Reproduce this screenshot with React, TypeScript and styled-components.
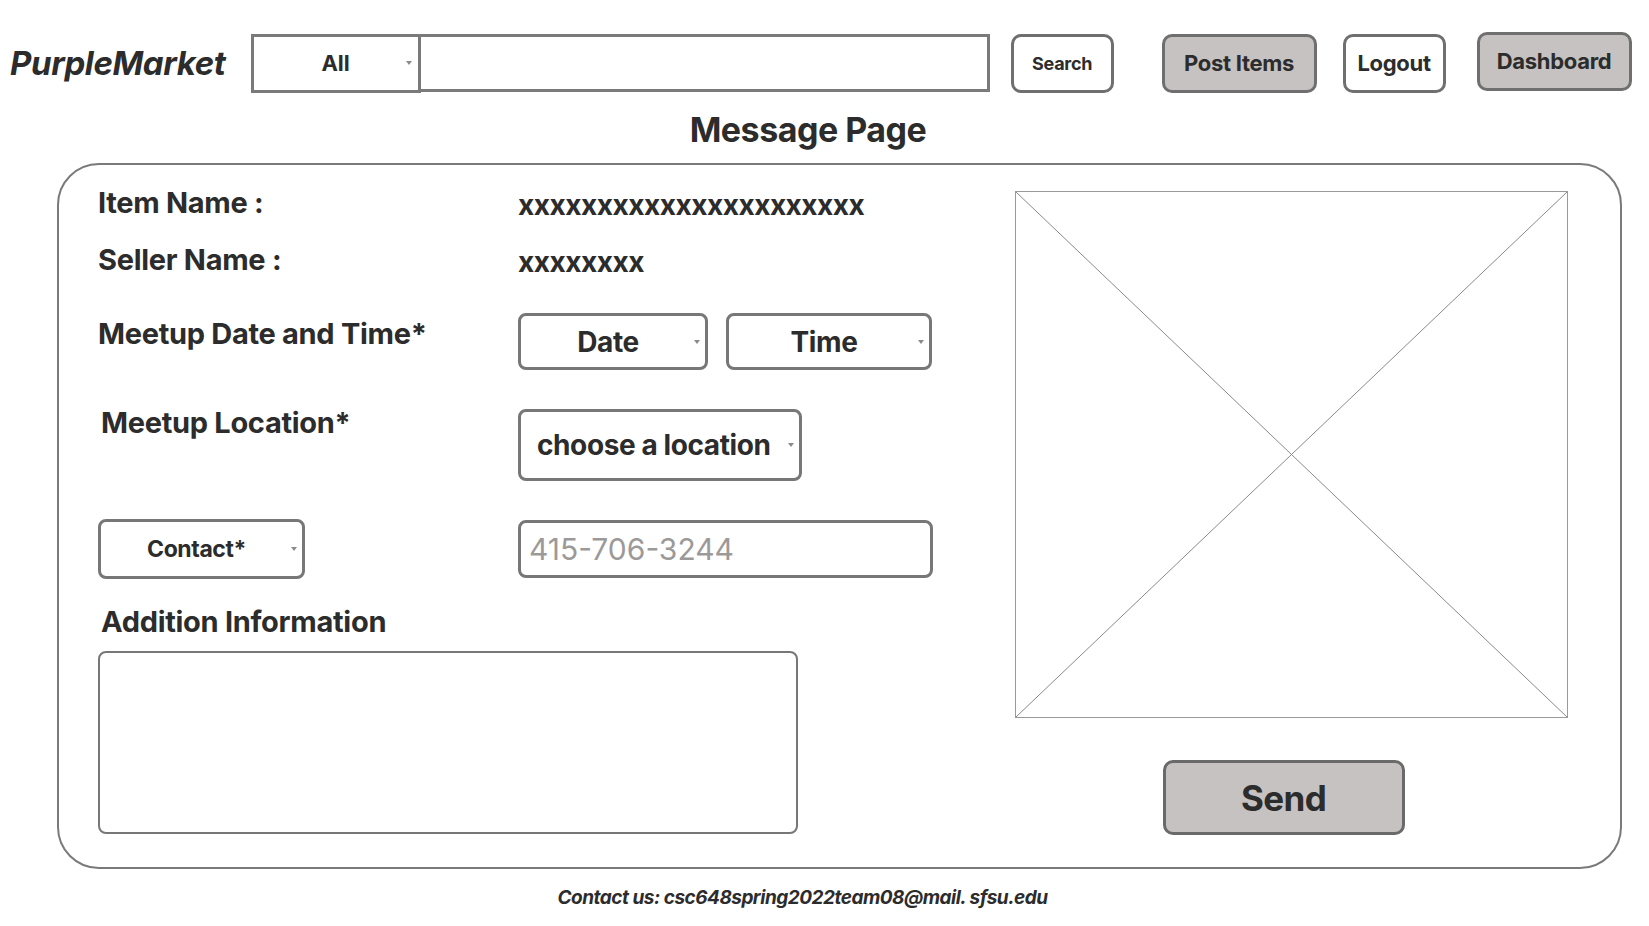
import styled, { createGlobalStyle } from "styled-components";

const GlobalStyle = createGlobalStyle`
  html, body {
    margin: 0;
    padding: 0;
    background: #ffffff;
  }
  body {
    font-family: "Inter", "Liberation Sans", sans-serif;
    color: #2c2c2c;
  }
`;

const Page = styled.div`
  width: 1649px;
  height: 926px;
  display: flex;
  flex-direction: column;
  box-sizing: border-box;
  padding-top: 33px;
`;

const Header = styled.header`
  display: flex;
  align-items: center;
  height: 60px;
  padding-left: 10px;
`;

const Logo = styled.div`
  font-size: 33px;
  font-weight: 700;
  font-style: italic;
  letter-spacing: -0.4px;
  margin-right: 25px;
`;

const CategorySelect = styled.div`
  position: relative;
  box-sizing: border-box;
  width: 170px;
  height: 59px;
  border: 3px solid #7a7a7a;
  display: flex;
  align-items: center;
  justify-content: center;
  font-size: 22px;
  font-weight: 700;
`;

const SearchInput = styled.input`
  box-sizing: border-box;
  width: 569px;
  height: 58px;
  border: 3px solid #7a7a7a;
  border-left: none;
  outline: none;
  font-size: 22px;
  padding: 0 10px;
`;

const Caret = styled.span<{ $right: number }>`
  position: absolute;
  right: ${(p) => p.$right}px;
  top: 50%;
  transform: translateY(-50%);
  width: 0;
  height: 0;
  border-left: 3px solid transparent;
  border-right: 3px solid transparent;
  border-top: 4px solid #8a8a8a;
`;

const HeaderButton = styled.button<{ $gray?: boolean; $width: number; $size: number; $gap: number; $lift?: number }>`
  box-sizing: border-box;
  width: ${(p) => p.$width}px;
  height: 59px;
  margin-left: ${(p) => p.$gap}px;
  margin-top: ${(p) => -(p.$lift ?? 0)}px;
  border: 3px solid #6f6f6f;
  border-radius: 10px;
  background: ${(p) => (p.$gray ? "#c5c2c1" : "#ffffff")};
  color: #2c2c2c;
  font-family: "Inter", "Liberation Sans", sans-serif;
  font-size: ${(p) => p.$size}px;
  font-weight: 700;
  letter-spacing: -0.3px;
  padding: 0;
  cursor: pointer;
`;

const Title = styled.h1`
  margin: 17px 0 0 0;
  padding-right: 33px;
  text-align: center;
  font-size: 34px;
  line-height: 40px;
  font-weight: 700;
  letter-spacing: -0.5px;
`;

const Card = styled.main`
  box-sizing: border-box;
  margin: 13px 27px 0 57px;
  height: 706px;
  border: 2px solid #7a7a7a;
  border-radius: 42px;
  display: flex;
  padding: 20px 52px 0 39px;
`;

const FormColumn = styled.div`
  width: 834px;
  display: flex;
  flex-direction: column;
`;

const Row = styled.div<{ $top: number }>`
  display: grid;
  grid-template-columns: 420px 1fr;
  align-items: start;
  margin-top: ${(p) => p.$top}px;
`;

const Label = styled.div<{ $shift?: number; $drop?: number }>`
  font-size: 29px;
  line-height: 36px;
  font-weight: 700;
  letter-spacing: -0.3px;
  margin-left: ${(p) => p.$shift ?? 0}px;
  margin-top: ${(p) => p.$drop ?? 0}px;
`;

const Value = styled.div`
  font-size: 28px;
  line-height: 32px;
  font-weight: 700;
  letter-spacing: -0.5px;
  padding-top: 4px;
`;

const SelectGroup = styled.div`
  display: flex;
  gap: 18px;
`;

const SelectBox = styled.div<{ $width: number; $height: number; $size: number; $align?: string }>`
  position: relative;
  box-sizing: border-box;
  width: ${(p) => p.$width}px;
  height: ${(p) => p.$height}px;
  border: 3px solid #777777;
  border-radius: 8px;
  display: flex;
  align-items: center;
  justify-content: ${(p) => p.$align ?? "center"};
  padding: ${(p) => (p.$align ? "0 0 0 16px" : "0 10px 0 0")};
  font-size: ${(p) => p.$size}px;
  font-weight: 700;
  letter-spacing: -0.4px;
  background: #ffffff;
`;

const PhoneInput = styled.input`
  box-sizing: border-box;
  width: 415px;
  height: 58px;
  margin-top: 1px;
  border: 3px solid #777777;
  border-radius: 8px;
  padding: 0 8px;
  font-family: "Inter", "Liberation Sans", sans-serif;
  font-size: 30px;
  color: #2c2c2c;
  outline: none;
  &::placeholder {
    color: #9c9999;
  }
`;

const SectionLabel = styled(Label)`
  margin-top: 25px;
  margin-left: 3px;
`;

const NotesArea = styled.textarea`
  box-sizing: border-box;
  width: 700px;
  height: 183px;
  margin-top: 11px;
  border: 2px solid #777777;
  border-radius: 8px;
  resize: none;
  outline: none;
  font-family: "Inter", "Liberation Sans", sans-serif;
  font-size: 22px;
  padding: 10px;
`;

const SideColumn = styled.div`
  margin-left: auto;
  display: flex;
  flex-direction: column;
  align-items: center;
  padding-top: 6px;
`;

const ImageFrame = styled.div`
  box-sizing: border-box;
  width: 553px;
  height: 527px;
  border: 1px solid #9a9a9a;
  svg {
    display: block;
  }
`;

const SendButton = styled.button`
  box-sizing: border-box;
  width: 242px;
  height: 75px;
  margin-top: 42px;
  margin-right: 16px;
  border: 3px solid #6a6a6a;
  border-radius: 10px;
  background: #c5c2c1;
  color: #2c2c2c;
  font-family: "Inter", "Liberation Sans", sans-serif;
  font-size: 35px;
  font-weight: 700;
  letter-spacing: -0.6px;
  cursor: pointer;
`;

const Footer = styled.footer`
  margin-top: 17px;
  padding-right: 44px;
  text-align: center;
  font-size: 19px;
  line-height: 24px;
  font-weight: 700;
  font-style: italic;
  letter-spacing: -0.5px;
`;

export default function App() {
  return (
    <>
      <GlobalStyle />
      <Page>
        <Header>
          <Logo>PurpleMarket</Logo>
          <CategorySelect>
            All
            <Caret $right={6} />
          </CategorySelect>
          <SearchInput type="text" />
          <HeaderButton $width={103} $size={18} $gap={21}>
            Search
          </HeaderButton>
          <HeaderButton $gray $width={155} $size={22} $gap={48}>
            Post Items
          </HeaderButton>
          <HeaderButton $width={103} $size={22} $gap={26}>
            Logout
          </HeaderButton>
          <HeaderButton $gray $width={155} $size={22} $gap={31} $lift={4}>
            Dashboard
          </HeaderButton>
        </Header>

        <Title>Message Page</Title>

        <Card>
          <FormColumn>
            <Row $top={0}>
              <Label>Item Name :</Label>
              <Value>xxxxxxxxxxxxxxxxxxxxxx</Value>
            </Row>
            <Row $top={21}>
              <Label>Seller Name :</Label>
              <Value>xxxxxxxx</Value>
            </Row>
            <Row $top={35}>
              <Label $drop={3}>Meetup Date and Time*</Label>
              <SelectGroup>
                <SelectBox $width={190} $height={57} $size={28}>
                  Date
                  <Caret $right={5} />
                </SelectBox>
                <SelectBox $width={206} $height={57} $size={28}>
                  Time
                  <Caret $right={5} />
                </SelectBox>
              </SelectGroup>
            </Row>
            <Row $top={39}>
              <Label $shift={3} $drop={-4}>Meetup Location*</Label>
              <SelectBox $width={284} $height={72} $size={28} $align="flex-start">
                choose a location
                <Caret $right={5} />
              </SelectBox>
            </Row>
            <Row $top={38}>
              <SelectBox $width={207} $height={60} $size={23}>
                Contact*
                <Caret $right={5} />
              </SelectBox>
              <PhoneInput type="tel" placeholder="415-706-3244" />
            </Row>
            <SectionLabel>Addition Information</SectionLabel>
            <NotesArea />
          </FormColumn>

          <SideColumn>
            <ImageFrame>
              <svg width="551" height="525" viewBox="0 0 551 525">
                <line x1="0" y1="0" x2="551" y2="525" stroke="#8a8a8a" strokeWidth="1" />
                <line x1="551" y1="0" x2="0" y2="525" stroke="#8a8a8a" strokeWidth="1" />
              </svg>
            </ImageFrame>
            <SendButton>Send</SendButton>
          </SideColumn>
        </Card>

        <Footer>Contact us: csc648spring2022team08@mail. sfsu.edu</Footer>
      </Page>
    </>
  );
}
